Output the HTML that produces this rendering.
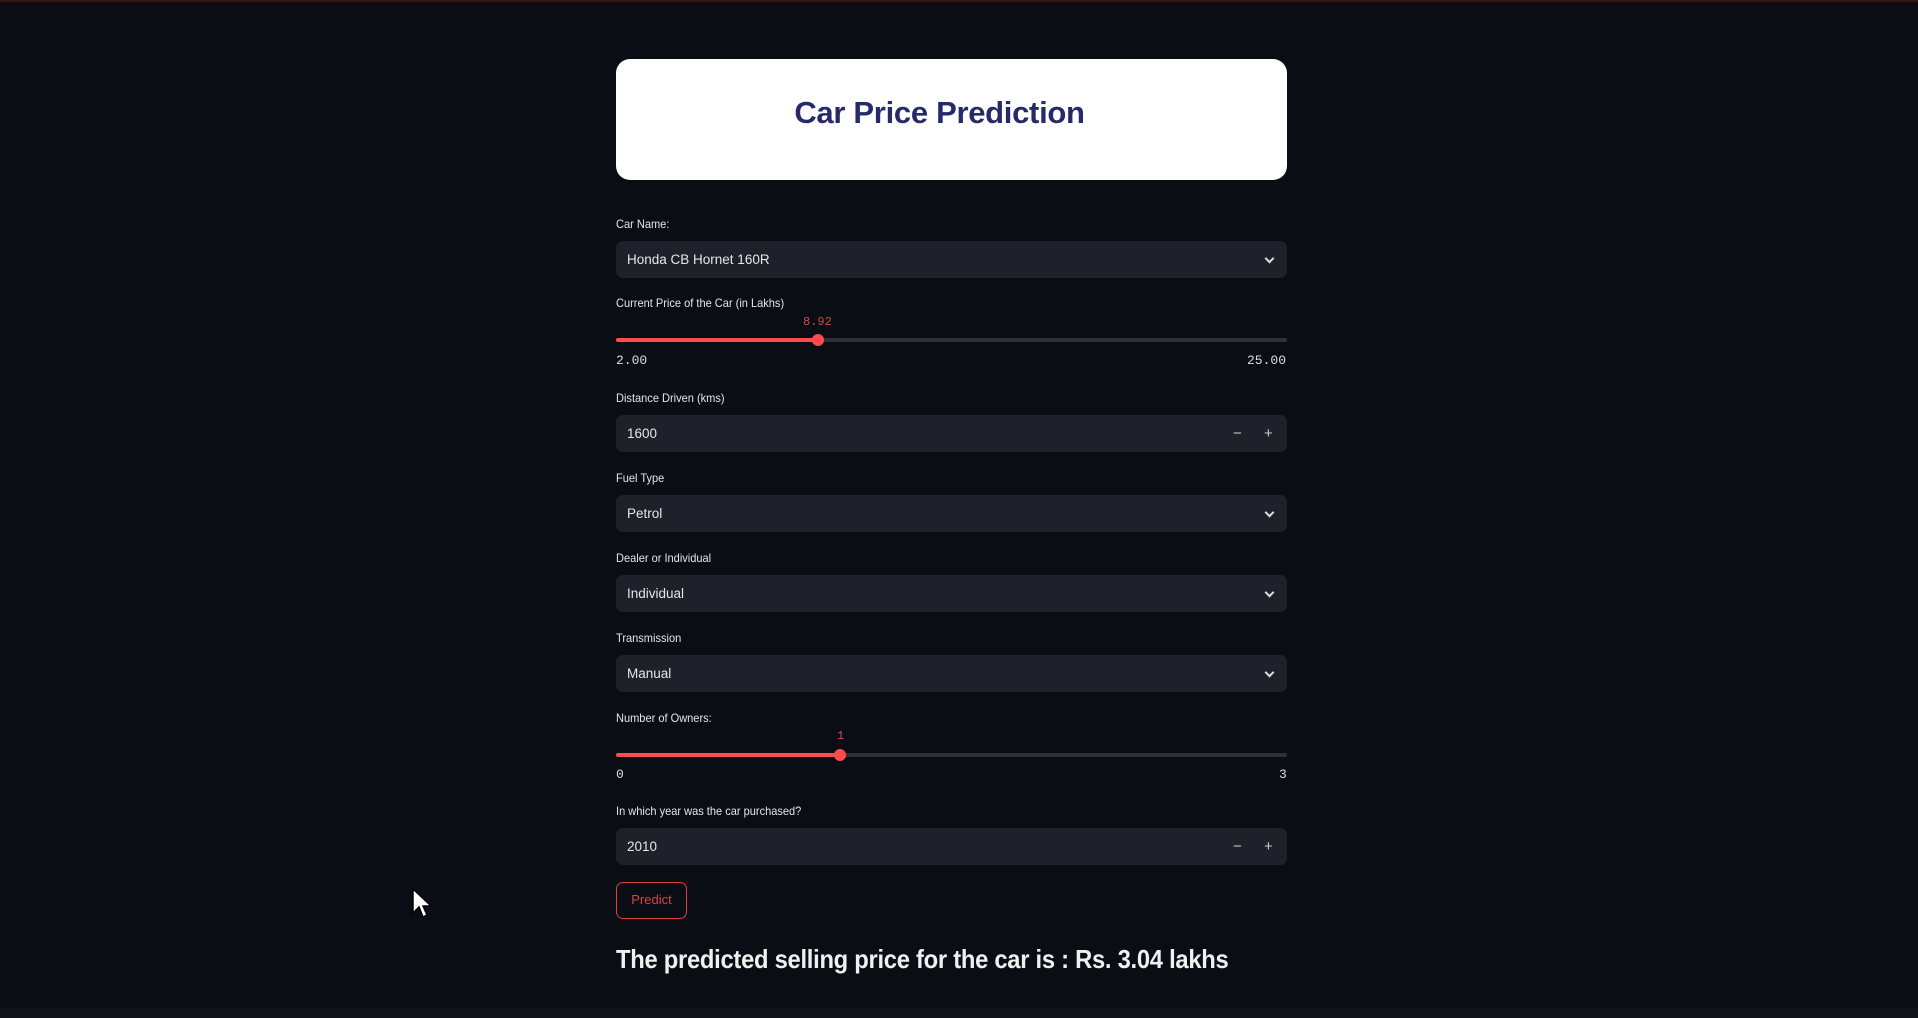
<!DOCTYPE html>
<html><head><meta charset="utf-8"><style>
*{margin:0;padding:0;box-sizing:border-box}
body{width:1918px;height:1018px;background:#0b0d14;font-family:"Liberation Sans Narrow","Liberation Sans",sans-serif;color:#e6e6ea;position:relative;overflow:hidden}
.topline{position:absolute;left:0;top:0;width:1918px;height:2px;background:#3a1418}
.abs{position:absolute}
.hdr{left:616px;top:59px;width:671px;height:121px;background:#fff;border-radius:14px}
.hdr span{position:absolute;left:0;width:671px;top:36px;text-align:center;font-weight:bold;font-size:31px;color:#262a6a;font-family:"Liberation Sans",sans-serif;letter-spacing:-0.3px;transform:translateX(-12px)}
.lbl{font-size:12px;color:#e6e6ea;left:616px;transform-origin:left;transform:scaleX(0.92)}
.box{left:616px;width:671px;height:37px;background:#1f2029;border-radius:7px;font-size:13.5px;line-height:37px;padding-left:11px}
.chev{position:absolute;right:14px;top:14px;width:7px;height:7px;border-right:2px solid #ddd;border-bottom:2px solid #ddd;transform:rotate(45deg)}
.mi{position:absolute;left:617px;top:0;font-size:15px;color:#ccc}
.pl{position:absolute;left:648px;top:0;font-size:15px;color:#ccc}
.track{left:616px;width:671px;height:4px;background:#2f313a;border-radius:2px}
.fill{position:absolute;left:0;top:0;height:4px;background:#ff4b4b;border-radius:2px}
.thumb{position:absolute;top:-4px;width:12px;height:12px;border-radius:6px;background:#ff4b4b}
.mono{font-family:"Liberation Mono",monospace;font-size:13px;color:#ddd}
.val{font-family:"Liberation Mono",monospace;font-size:12px;color:#d84848}
.btn{left:616px;top:882px;width:71px;height:37px;border:1.5px solid #e04040;border-radius:7px;color:#e04040;font-size:13px;text-align:center;line-height:34px}
.res{left:616px;top:944px;font-size:26px;font-weight:bold;color:#f0f0f0;letter-spacing:-0.3px;transform-origin:left top;transform:scaleX(0.914);white-space:nowrap}
.bot{left:0;top:1008px;width:1918px;height:10px;background:#111318}
</style></head><body>
<div class="topline"></div>
<div class="abs hdr"><span>Car Price Prediction</span></div>

<div class="abs lbl" style="top:217px">Car Name:</div>
<div class="abs box" style="top:241px">Honda CB Hornet 160R<div class="chev"></div></div>

<div class="abs lbl" style="top:296px">Current Price of the Car (in Lakhs)</div>
<div class="abs val" style="left:803px;top:315px">8.92</div>
<div class="abs track" style="top:338px"><div class="fill" style="width:202px"></div><div class="thumb" style="left:196px"></div></div>
<div class="abs mono" style="left:616px;top:353px">2.00</div>
<div class="abs mono" style="left:1247px;top:353px">25.00</div>

<div class="abs lbl" style="top:391px">Distance Driven (kms)</div>
<div class="abs box" style="top:415px">1600<span class="mi">−</span><span class="pl">+</span></div>

<div class="abs lbl" style="top:471px">Fuel Type</div>
<div class="abs box" style="top:495px">Petrol<div class="chev"></div></div>

<div class="abs lbl" style="top:551px">Dealer or Individual</div>
<div class="abs box" style="top:575px">Individual<div class="chev"></div></div>

<div class="abs lbl" style="top:631px">Transmission</div>
<div class="abs box" style="top:655px">Manual<div class="chev"></div></div>

<div class="abs lbl" style="top:711px">Number of Owners:</div>
<div class="abs val" style="left:837px;top:729px">1</div>
<div class="abs track" style="top:753px"><div class="fill" style="width:224px"></div><div class="thumb" style="left:218px"></div></div>
<div class="abs mono" style="left:616px;top:767px">0</div>
<div class="abs mono" style="left:1279px;top:767px">3</div>

<div class="abs lbl" style="top:804px">In which year was the car purchased?</div>
<div class="abs box" style="top:828px">2010<span class="mi">−</span><span class="pl">+</span></div>

<div class="abs btn">Predict</div>
<div class="abs res">The predicted selling price for the car is : Rs. 3.04 lakhs</div>

<svg class="abs" style="left:411px;top:887px" width="24" height="34" viewBox="0 0 24 34"><path d="M2 2 L2 26 L8 20 L12 30 L16 28 L12 19 L20 19 Z" fill="#fff" stroke="#000" stroke-width="1.5"/></svg>
<div class="abs bot"></div>
</body></html>
